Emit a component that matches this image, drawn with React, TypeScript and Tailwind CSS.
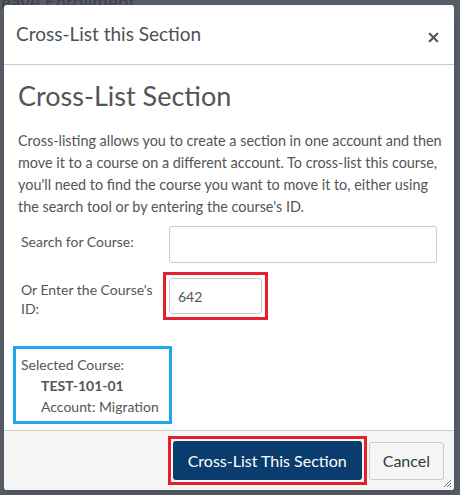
import { X } from 'lucide-react';

const CrossListDialog = () => {
  return (
    <div className="w-[450px] h-[485px] bg-white rounded-[3px] shadow-lg flex flex-col relative">
      {/* Header */}
      <div className="h-[60px] shrink-0 flex items-center justify-between px-3 border-b border-[#c7cdd1]">
        <h2 className="text-[19px] text-[#4b5257]">Cross-List this Section</h2>
        <X className="w-[15px] h-[15px] text-[#555] mr-[1px] mt-[6px]" strokeWidth={3.5} />
      </div>

      {/* Body */}
      <div className="flex-1 pl-[14px] pr-[8px] pt-[14px]">
        <h1 className="text-[27px] leading-[34px] text-[#545454]">Cross-List Section</h1>
        <p className="mt-[17px] text-[14.4px] leading-[22px] text-[#555]">
          Cross-listing allows you to create a section in one account and then move it to a course on a different account. To cross-list this course, you'll need to find the course you want to move it to, either using the search tool or by entering the course's ID.
        </p>

        <div className="mt-[8px] flex items-start">
          <label className="w-[151px] pl-[3px] pt-[5px] text-[14px] text-[#555]">Search for Course:</label>
          <input
            className="w-[268px] h-[37px] border border-[#ccc] rounded-[3px] px-2 text-[14px] outline-none"
            defaultValue=""
          />
        </div>

        <div className="mt-[9px] flex items-start">
          <label className="w-[145px] pl-[3px] pt-[8px] text-[14px] leading-[19px] text-[#555]">
            Or Enter the Course's ID:
          </label>
          <div className="border-[3px] border-[#e4202c] p-[3px]">
            <input
              className="w-[93px] h-[36px] border border-[#ccc] rounded-[3px] px-2 text-[14px] text-[#555] outline-none"
              defaultValue="642"
            />
          </div>
        </div>

        <div className="mt-[26px] ml-[-5px] w-[159px] border-[3px] border-[#1ea7ef] px-[5px] pt-[5px] pb-[4px] text-[14px] leading-[21px] text-[#555]">
          <div>Selected Course:</div>
          <div className="pl-[20px] font-bold">TEST-101-01</div>
          <div className="pl-[20px]">Account: Migration</div>
        </div>
      </div>

      {/* Footer */}
      <div className="h-[60px] shrink-0 bg-[#f5f5f5] border-t border-[#c7cdd1] rounded-b-[3px] flex items-center justify-end gap-[2px] pr-[10px]">
        <div className="border-[3px] border-[#e4202c] p-[2px]">
          <button className="h-[39px] px-[15px] bg-[#0a3d6e] text-white text-[16px] rounded-[3px]">
            Cross-List This Section
          </button>
        </div>
        <button className="h-[38px] px-[13px] bg-[#f5f5f5] border border-[#c7cdd1] rounded-[3px] text-[16px] text-[#2d3b45]">
          Cancel
        </button>
        <svg className="absolute right-[2px] bottom-[2px]" width="10" height="10" viewBox="0 0 10 10">
          <path d="M9 2 L2 9 M9 5 L5 9 M9 8 L8 9" stroke="#777" strokeWidth="1" />
        </svg>
      </div>
    </div>
  );
};

export default function App() {
  return (
    <div
      className="w-[460px] h-[495px] bg-[#565d65] relative overflow-hidden pl-[4px] pt-[5px]"
      style={{ fontFamily: 'Lato, "Liberation Sans", sans-serif' }}
    >
      <div className="absolute left-[-8px] top-[-12px] text-[19px] text-[#3c4247]">Leave Enrollment</div>
      <CrossListDialog />
    </div>
  );
}
